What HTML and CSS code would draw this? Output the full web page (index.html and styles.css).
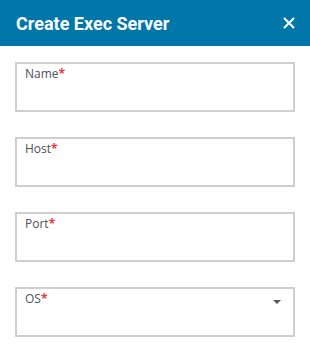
FILE: index.html
```html
<!DOCTYPE html>
<html>
<head>
<meta charset="utf-8">
<link rel="stylesheet" href="styles.css">
</head>
<body>
<div class="header">
  <span class="title">Create Exec Server</span>
  <svg class="close" width="12" height="12" viewBox="0 0 12 12"><path d="M1 1L11 11M11 1L1 11" stroke="#fff" stroke-width="2" fill="none"/></svg>
</div>
<div class="form">
  <div class="field"><span class="label">Name<span class="req">*</span></span></div>
  <div class="field"><span class="label">Host<span class="req">*</span></span></div>
  <div class="field"><span class="label">Port<span class="req">*</span></span></div>
  <div class="field select"><span class="label">OS<span class="req">*</span></span><span class="arrow"></span></div>
</div>
</body>
</html>
```
FILE: styles.css
```css
html, body { margin: 0; padding: 0; background: #fff; }
body { width: 310px; height: 352px; overflow: hidden; font-family: "Open Sans", sans-serif; }
.header {
  height: 46px;
  background: #0176a9;
  display: flex;
  align-items: center;
  justify-content: space-between;
  padding: 0 15px 0 16px;
}
.title { color: #fff; font-family: Roboto, sans-serif; font-weight: 700; font-size: 18px; letter-spacing: 0; }
.close { display: block; }
.form { display: flex; flex-direction: column; gap: 25px; padding: 16px 15px 0 15px; }
.field {
  height: 50px;
  box-sizing: border-box;
  border: 2px solid #cfcfcf;
  padding: 2px 8px 0 8px;
  display: flex;
  justify-content: space-between;
  align-items: flex-start;
}
.label { font-size: 12px; color: #4f5058; line-height: 16px; }
.req { color: #e8383d; font-weight: 700; }
.arrow {
  margin-top: 9px;
  margin-right: 4px;
  width: 0; height: 0;
  border-left: 4px solid transparent;
  border-right: 4px solid transparent;
  border-top: 4px solid #555;
}
```
